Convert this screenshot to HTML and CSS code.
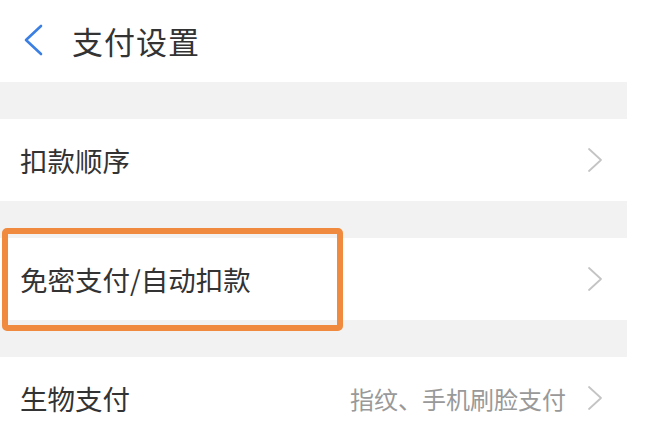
FILE: index.html
```html
<!DOCTYPE html>
<html lang="zh-CN">

<head>
    <meta charset="UTF-8">
    <meta name="viewport" content="width=device-width, initial-scale=1.0">
    <title>支付设置</title>
    <link rel="stylesheet" href="styles.css">
</head>

<body>
    <div class="page">
        <div class="header">
            <svg class="back" width="22" height="32" viewBox="0 0 22 32">
                <path d="M19 2 L4 16 L19 30" fill="none" stroke="#3b7fe3" stroke-width="2.6" stroke-linecap="round" stroke-linejoin="round" />
            </svg>
            <h1 class="title">支付设置</h1>
        </div>
        <div class="gap"></div>
        <div class="row">
            <span class="label">扣款顺序</span>
            <svg class="arrow" width="16" height="26" viewBox="0 0 16 26">
                <path d="M2 2 L14 13 L2 24" fill="none" stroke="#c4c4c4" stroke-width="1.8" stroke-linecap="round" stroke-linejoin="round" />
            </svg>
        </div>
        <div class="gap"></div>
        <div class="row mark">
            <span class="label">免密支付/自动扣款</span>
            <svg class="arrow" width="16" height="26" viewBox="0 0 16 26">
                <path d="M2 2 L14 13 L2 24" fill="none" stroke="#c4c4c4" stroke-width="1.8" stroke-linecap="round" stroke-linejoin="round" />
            </svg>
            <div class="highlight"></div>
        </div>
        <div class="gap"></div>
        <div class="row">
            <span class="label">生物支付</span>
            <span class="extra">指纹、手机刷脸支付</span>
            <svg class="arrow" width="16" height="26" viewBox="0 0 16 26">
                <path d="M2 2 L14 13 L2 24" fill="none" stroke="#c4c4c4" stroke-width="1.8" stroke-linecap="round" stroke-linejoin="round" />
            </svg>
        </div>
    </div>
</body>

</html>
```

FILE: styles.css
```css
* {
    margin: 0;
    padding: 0;
}

body {
    background-color: #fff;
    font-family: "Noto Sans CJK SC", "Noto Sans", sans-serif;
    color: #333;
}

.page {
    width: 627px;
}

.header {
    display: flex;
    align-items: center;
    height: 82px;
    padding-left: 22px;
    padding-bottom: 2px;
    box-sizing: border-box;
}

.back {
    display: block;
    margin-right: 28px;
}

.title {
    font-size: 31px;
    font-weight: normal;
    color: #333;
    letter-spacing: 1px;
}

.gap {
    height: 37px;
    background-color: #f2f2f2;
}

.row {
    position: relative;
    display: flex;
    align-items: center;
    height: 82px;
    padding: 0 24px 0 20px;
    background-color: #fff;
}

.label {
    flex: 1;
    font-size: 27.5px;
    color: #333;
}

.extra {
    font-size: 24px;
    color: #999;
    margin-right: 21px;
}

.arrow {
    display: block;
}

.highlight {
    position: absolute;
    left: 2px;
    top: -10px;
    width: 341px;
    height: 103px;
    box-sizing: border-box;
    border: 6px solid #f08a3e;
    border-radius: 5px;
}
```
